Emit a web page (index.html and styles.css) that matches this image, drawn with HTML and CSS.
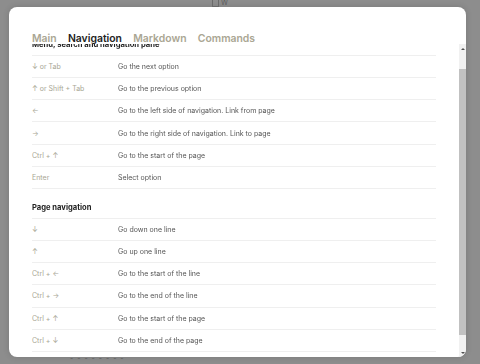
FILE: index.html
```html
<!DOCTYPE html>
<html lang="en">
<head>
    <meta charset="UTF-8">
    <meta name="viewport" content="width=device-width, initial-scale=1.0">
    <title>Keyboard shortcuts</title>
    <link rel="stylesheet" href="styles.css">
</head>
<body>

    <!-- page behind the overlay -->
    <div class="behind behind-top"><span class="box"></span> W</div>
    <div class="behind behind-bottom">- - - - - - - -</div>

    <div class="modal">
        <!-- Tabs -->
        <div class="tabs">
            <span class="tab">Main</span>
            <span class="tab active">Navigation</span>
            <span class="tab">Markdown</span>
            <span class="tab">Commands</span>
        </div>

        <div class="body">
            <div class="scroll" id="scroll">
                <!-- Menu, search and navigation pane -->
                <div class="section">
                    <div class="section-title">Menu, search and navigation pane</div>
                    <div class="row"><span class="key">↓ or Tab</span><span class="desc">Go the next option</span></div>
                    <div class="row"><span class="key">↑ or Shift + Tab</span><span class="desc">Go to the previous option</span></div>
                    <div class="row"><span class="key">←</span><span class="desc">Go to the left side of navigation. Link from page</span></div>
                    <div class="row"><span class="key">→</span><span class="desc">Go to the right side of navigation. Link to page</span></div>
                    <div class="row"><span class="key">Ctrl + ↑</span><span class="desc">Go to the start of the page</span></div>
                    <div class="row"><span class="key">Enter</span><span class="desc">Select option</span></div>
                </div>

                <!-- Page navigation -->
                <div class="section">
                    <div class="section-title">Page navigation</div>
                    <div class="row"><span class="key">↓</span><span class="desc">Go down one line</span></div>
                    <div class="row"><span class="key">↑</span><span class="desc">Go up one line</span></div>
                    <div class="row"><span class="key">Ctrl + ←</span><span class="desc">Go to the start of the line</span></div>
                    <div class="row"><span class="key">Ctrl + →</span><span class="desc">Go to the end of the line</span></div>
                    <div class="row"><span class="key">Ctrl + ↑</span><span class="desc">Go to the start of the page</span></div>
                    <div class="row"><span class="key">Ctrl + ↓</span><span class="desc">Go to the end of the page</span></div>
                </div>
            </div>

            <!-- scrollbar -->
            <div class="scrollbar">
                <div class="sb-btn"><span class="arrow-up"></span></div>
                <div class="sb-track"><div class="sb-thumb"></div></div>
                <div class="sb-btn"><span class="arrow-down"></span></div>
            </div>
        </div>
    </div>

    <script>
        document.getElementById("scroll").scrollTop = 19;
    </script>

</body>
</html>
```

FILE: styles.css
```css
body {
    font-family: Inter, "Noto Sans", sans-serif;
    background-color: #8d8d8d;
    margin: 0;
    padding: 7px 14px 0 9px;
    height: 364px;
    box-sizing: border-box;
    overflow: hidden;
    -webkit-font-smoothing: antialiased;
}
.behind {
    position: absolute;
    color: #5a5a5a;
    font-size: 7px;
}
.behind-top {
    left: 212px;
    top: -2px;
}
.behind-top .box {
    display: inline-block;
    width: 5px;
    height: 6px;
    border: 1px solid #6a6a6a;
    vertical-align: middle;
}
.behind-bottom {
    left: 70px;
    top: 354px;
    letter-spacing: 1px;
}
.modal {
    background: white;
    width: 457px;
    height: 350px;
    border-radius: 8px;
    overflow: hidden;
    display: flex;
    flex-direction: column;
    box-shadow: 0 0 6px rgba(0, 0, 0, 0.15);
}
.tabs {
    height: 37px;
    flex-shrink: 0;
    display: flex;
    align-items: flex-end;
    gap: 11.3px;
    padding: 0 23px;
    box-sizing: border-box;
}
.tab {
    font-size: 10.4px;
    font-weight: 600;
    line-height: 11px;
    color: #aaa693;
}
.tab.active {
    color: #222;
}
.body {
    flex: 1;
    display: flex;
    min-height: 0;
}
.scroll {
    flex: 1;
    overflow: hidden;
    padding: 1px 23px 21px;
}
.scrollbar {
    width: 7px;
    display: flex;
    flex-direction: column;
    background: #f1f1f1;
}
.sb-btn {
    height: 9px;
    display: flex;
    align-items: center;
    justify-content: center;
}
.arrow-up, .arrow-down {
    width: 0;
    height: 0;
    border-left: 2px solid transparent;
    border-right: 2px solid transparent;
}
.arrow-up {
    border-bottom: 2px solid #505050;
}
.arrow-down {
    border-top: 2px solid #505050;
}
.sb-track {
    flex: 1;
    display: flex;
    flex-direction: column;
    padding: 16px 0 13px;
}
.sb-thumb {
    flex: 1;
    background: #c1c1c1;
}
.section-title {
    font-size: 7.6px;
    font-weight: 700;
    color: #222;
    line-height: 11px;
    padding: 13px 0 5px;
    border-bottom: 1px solid #efefef;
    filter: grayscale(1);
}
.row {
    display: grid;
    grid-template-columns: 86px 1fr;
    align-items: center;
    height: 21.17px;
    border-bottom: 1px solid #efefef;
    font-size: 7px;
}
.key {
    color: #a8a694;
}
.desc {
    color: #555;
    filter: grayscale(1);
}
```
